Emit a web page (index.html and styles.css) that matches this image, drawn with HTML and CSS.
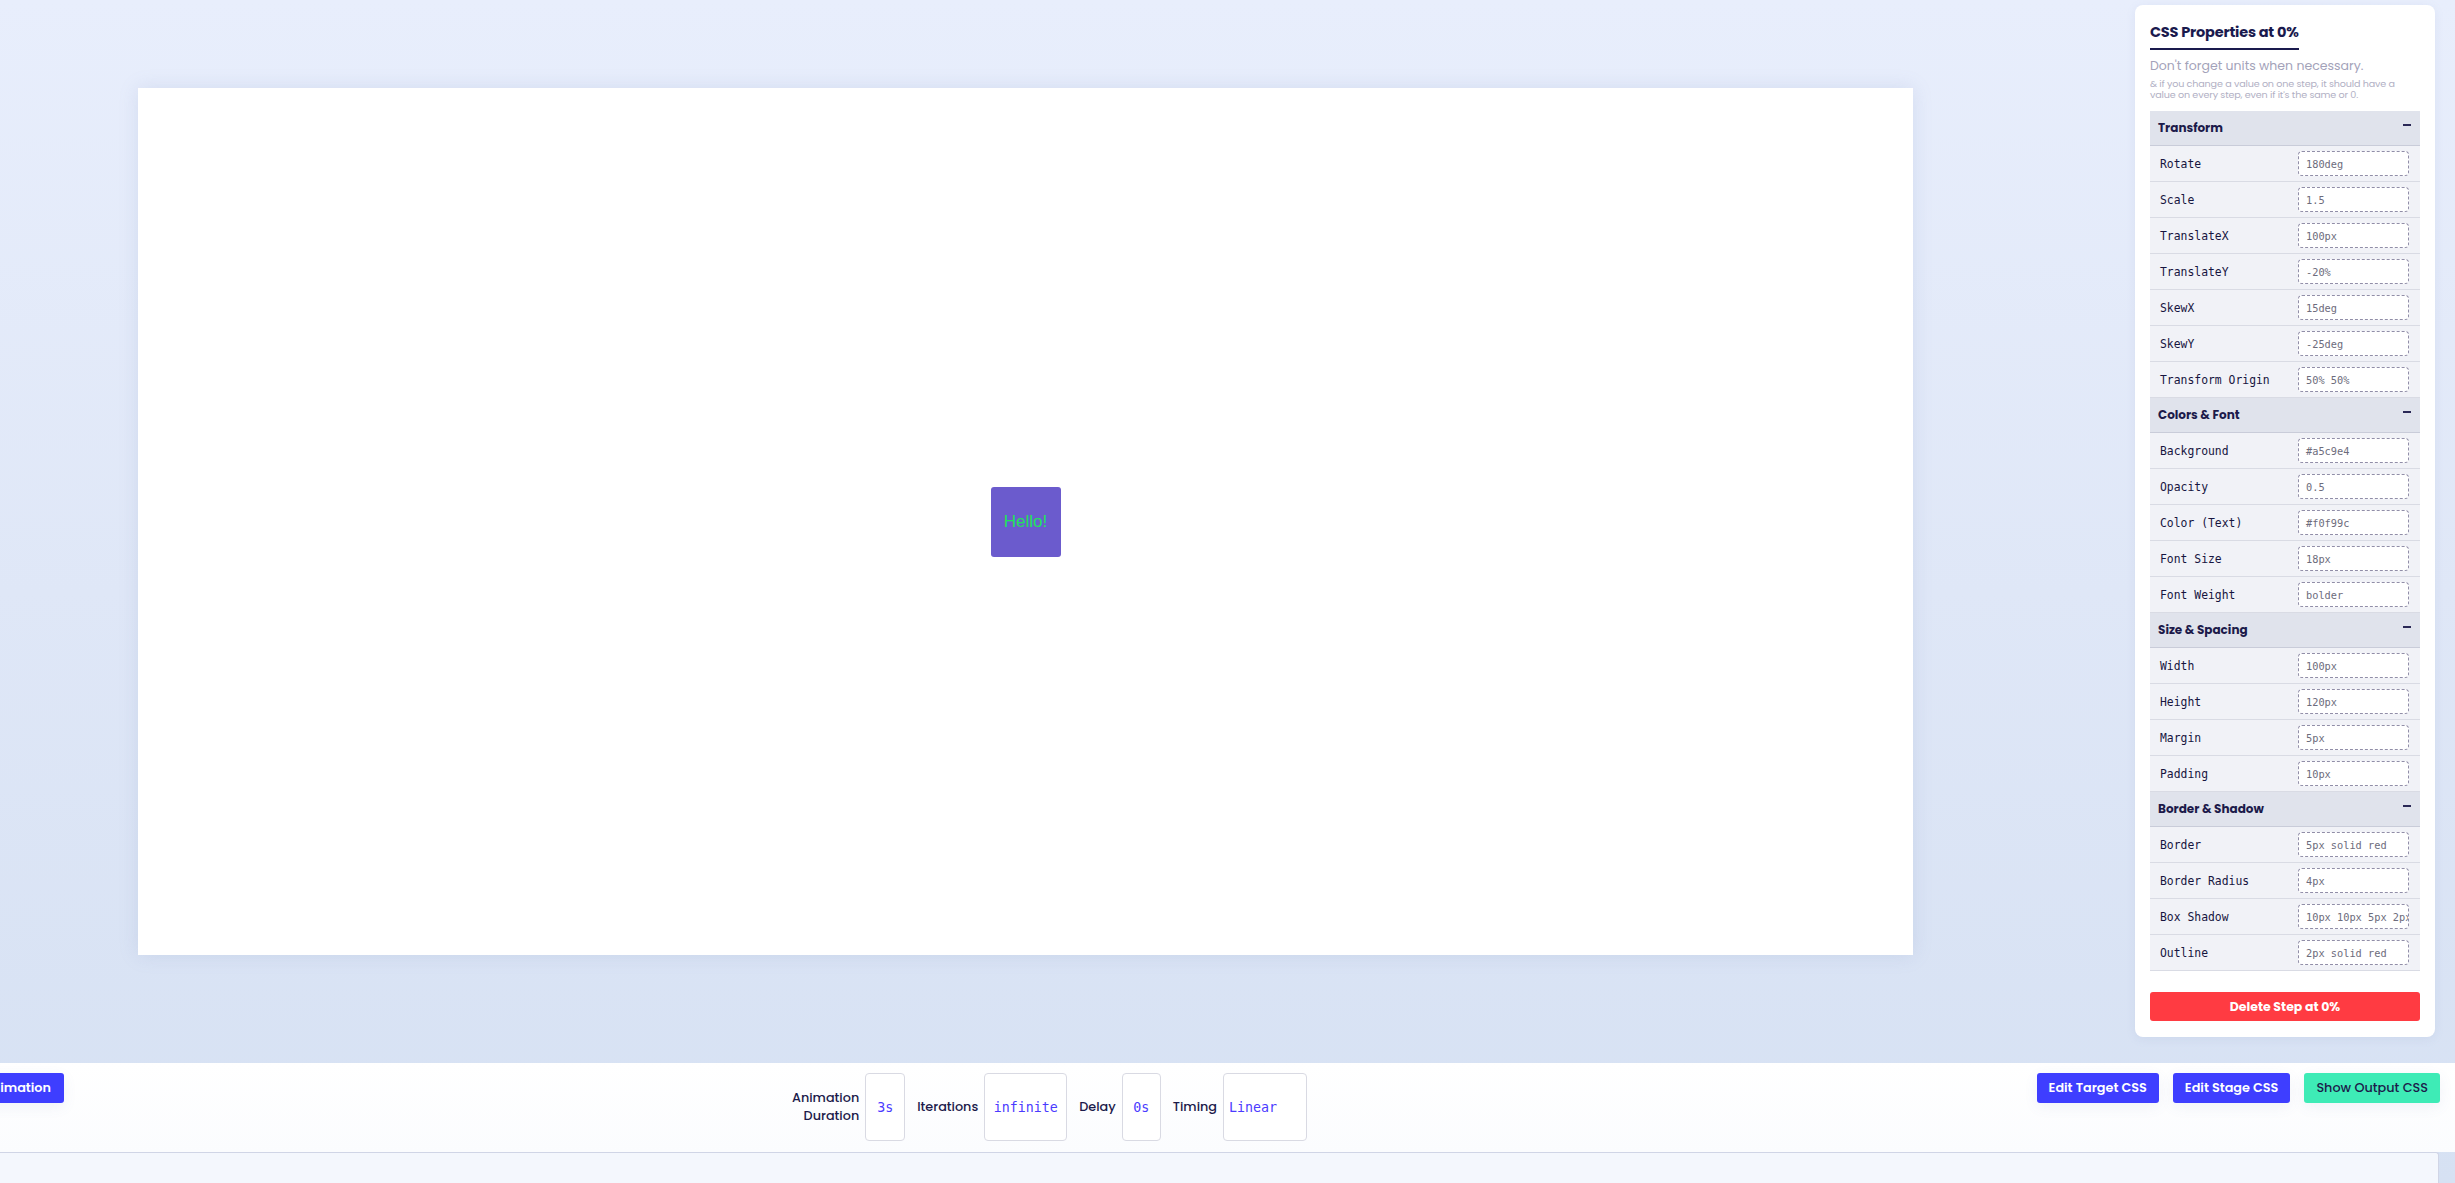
FILE: index.html
```html
<!DOCTYPE html>
<html>
<head>
<meta charset="utf-8">
<link rel="stylesheet" href="styles.css">
</head>
<body>
<div class="app">
  <div class="main">
    <div class="stage-area">
      <div class="stage">
        <div class="target">Hello!</div>
      </div>
    </div>
    <aside class="panel">
      <h2 class="panel-title">CSS Properties at 0%</h2>
      <p class="panel-sub">Don't forget units when necessary.</p>
      <p class="panel-note">&amp; if you change a value on one step, it should have a value on every step, even if it's the same or 0.</p>
      <div class="props">
        <div class="group-head"><span>Transform</span><i class="minus"></i></div>
        <div class="row"><span class="lbl">Rotate</span><span class="inp">180deg</span></div>
        <div class="row"><span class="lbl">Scale</span><span class="inp">1.5</span></div>
        <div class="row"><span class="lbl">TranslateX</span><span class="inp">100px</span></div>
        <div class="row"><span class="lbl">TranslateY</span><span class="inp">-20%</span></div>
        <div class="row"><span class="lbl">SkewX</span><span class="inp">15deg</span></div>
        <div class="row"><span class="lbl">SkewY</span><span class="inp">-25deg</span></div>
        <div class="row"><span class="lbl">Transform Origin</span><span class="inp">50% 50%</span></div>
        <div class="group-head"><span>Colors &amp; Font</span><i class="minus"></i></div>
        <div class="row"><span class="lbl">Background</span><span class="inp">#a5c9e4</span></div>
        <div class="row"><span class="lbl">Opacity</span><span class="inp">0.5</span></div>
        <div class="row"><span class="lbl">Color (Text)</span><span class="inp">#f0f99c</span></div>
        <div class="row"><span class="lbl">Font Size</span><span class="inp">18px</span></div>
        <div class="row"><span class="lbl">Font Weight</span><span class="inp">bolder</span></div>
        <div class="group-head"><span>Size &amp; Spacing</span><i class="minus"></i></div>
        <div class="row"><span class="lbl">Width</span><span class="inp">100px</span></div>
        <div class="row"><span class="lbl">Height</span><span class="inp">120px</span></div>
        <div class="row"><span class="lbl">Margin</span><span class="inp">5px</span></div>
        <div class="row"><span class="lbl">Padding</span><span class="inp">10px</span></div>
        <div class="group-head"><span>Border &amp; Shadow</span><i class="minus"></i></div>
        <div class="row"><span class="lbl">Border</span><span class="inp">5px solid red</span></div>
        <div class="row"><span class="lbl">Border Radius</span><span class="inp">4px</span></div>
        <div class="row"><span class="lbl">Box Shadow</span><span class="inp">10px 10px 5px 2px</span></div>
        <div class="row"><span class="lbl">Outline</span><span class="inp">2px solid red</span></div>
      </div>
      <button class="btn-delete">Delete Step at 0%</button>
    </aside>
  </div>
  <div class="bar">
    <button class="btn btn-blue btn-play">Play Animation</button>
    <div class="controls">
      <span class="clabel two">Animation<br>Duration</span>
      <span class="cbox w40">3s</span>
      <span class="clabel">Iterations</span>
      <span class="cbox w83">infinite</span>
      <span class="clabel">Delay</span>
      <span class="cbox w39">0s</span>
      <span class="clabel">Timing</span>
      <span class="cbox w84 sel">Linear</span>
    </div>
    <div class="actions">
      <button class="btn btn-blue">Edit Target CSS</button>
      <button class="btn btn-blue">Edit Stage CSS</button>
      <button class="btn btn-green">Show Output CSS</button>
    </div>
  </div>
  <div class="lower"></div>
</div>
</body>
</html>
```

FILE: styles.css
```css
* { box-sizing: border-box; }
html, body { margin: 0; padding: 0; }
body {
  width: 2455px;
  height: 1183px;
  overflow: hidden;
  font-family: "Poppins", "Open Sans", sans-serif;
  background: linear-gradient(180deg, #e8eefc 0%, #dfe7f7 50%, #d6e1f3 100%);
  color: #1c1a4a;
}
.app { display: flex; flex-direction: column; height: 1183px; }
.main { display: flex; height: 1063px; }
.stage-area { flex: 1; }
.stage {
  margin: 88px 0 0 138px;
  width: 1775px;
  height: 867px;
  background: #fff;
  box-shadow: 0 0 18px rgba(120, 140, 190, 0.18);
  display: flex;
  align-items: center;
  justify-content: center;
}
.target {
  width: 70px;
  height: 70px;
  background: #6b5bcd;
  border-radius: 3px;
  color: #1fe35a;
  font-family: "Liberation Sans", Arial, sans-serif;
  font-size: 17px;
  display: flex;
  align-items: center;
  justify-content: center;
}
.panel {
  width: 300px;
  height: 1032px;
  margin: 5px 20px 0 0;
  background: #fff;
  border-radius: 8px;
  padding: 17px 15px 16px 15px;
  box-shadow: 0 2px 10px rgba(120, 140, 190, 0.12);
  display: flex;
  flex-direction: column;
}
.panel-title {
  margin: 0;
  align-self: flex-start;
  font-size: 14.5px;
  font-weight: 700;
  line-height: 20px;
  color: #1a1a4e;
  padding-bottom: 6px;
  border-bottom: 2px solid #1a1a4e;
  letter-spacing: -0.2px;
}
.panel-sub {
  margin: 7px 0 0 0;
  font-size: 12.5px;
  line-height: 18px;
  color: #a3a2b9;
}
.panel-note {
  margin: 4px 0 0 0;
  font-size: 9.6px;
  line-height: 10.5px;
  color: #b1b0c4;
  letter-spacing: -0.15px;
}
.props { margin-top: 11px; }
.group-head {
  height: 35px;
  background: #e0e3ec;
  border-bottom: 1px solid #c9ccd9;
  display: flex;
  align-items: center;
  justify-content: space-between;
  padding: 0 9px 0 8px;
  font-size: 12px;
  font-weight: 700;
  color: #1c1a4a;
}
.minus {
  display: block;
  width: 8px;
  height: 2px;
  background: #2a2856;
  margin-top: -7px;
}
.row {
  height: 36px;
  background: #f1f2f7;
  border-bottom: 1px solid #d9dbe4;
  display: flex;
  align-items: center;
  justify-content: space-between;
  padding: 0 11px 0 10px;
}
.lbl {
  font-family: "DejaVu Sans Mono", "Liberation Mono", monospace;
  font-size: 11.4px;
  color: #17153f;
}
.inp {
  width: 111px;
  height: 25px;
  background: #fff;
  border: 1px dashed #918ea8;
  border-radius: 4px;
  padding: 0 0 0 7px;
  display: flex;
  align-items: center;
  font-family: "DejaVu Sans Mono", "Liberation Mono", monospace;
  font-size: 10.3px;
  color: #6d6c7c;
  white-space: nowrap;
  overflow: hidden;
}
.btn-delete {
  margin-top: 21px;
  height: 30px;
  width: 100%;
  border: none;
  border-radius: 3px;
  background: #ff3b42;
  color: #fff;
  font-family: "Poppins", "Open Sans", sans-serif;
  font-weight: 700;
  font-size: 12.5px;
}
.bar {
  height: 89px;
  background: linear-gradient(180deg, #ffffff 0%, #fbfcfe 100%);
  display: flex;
  align-items: flex-start;
  padding: 10px 15px 0 0;
}
.btn {
  height: 30px;
  border: none;
  border-radius: 3px;
  font-family: "Poppins", "Open Sans", sans-serif;
  font-size: 12.8px;
  font-weight: 600;
  padding: 0 12px;
  white-space: nowrap;
  box-shadow: 0 4px 14px rgba(90, 100, 160, 0.08);
}
.btn-blue { background: #3e3eff; color: #fff; }
.btn-green { background: #3eebb6; color: #1c1a4a; font-weight: 500; }
.btn-play { width: 130px; margin-left: -66px; text-align: right; padding-right: 13px; }
.controls {
  margin-left: 728px;
  display: flex;
  align-items: center;
  height: 68px;
}
.clabel {
  font-size: 12.8px;
  font-weight: 500;
  color: #1c1a4a;
  line-height: 18px;
  margin-left: 12px;
  margin-right: 6px;
  white-space: nowrap;
}
.clabel.two { text-align: right; margin-left: 0; }
.cbox {
  height: 68px;
  border: 1px solid #d9dae3;
  border-radius: 4px;
  background: #fff;
  display: flex;
  align-items: center;
  justify-content: center;
  font-family: "DejaVu Sans Mono", "Liberation Mono", monospace;
  font-size: 13.3px;
  color: #4b3bff;
}
.w40 { width: 40px; }
.w39 { width: 39px; }
.w83 { width: 83px; }
.w84 { width: 84px; }
.cbox.sel { justify-content: flex-start; padding-left: 5px; }
.actions {
  margin-left: auto;
  display: flex;
  gap: 14px;
}
.lower {
  flex: 1;
  margin-right: 16px;
  background: #f4f7fd;
  border-top: 1px solid #d0d5e6;
  border-right: 1px solid #d0d5e6;
  border-top-right-radius: 3px;
}
```
